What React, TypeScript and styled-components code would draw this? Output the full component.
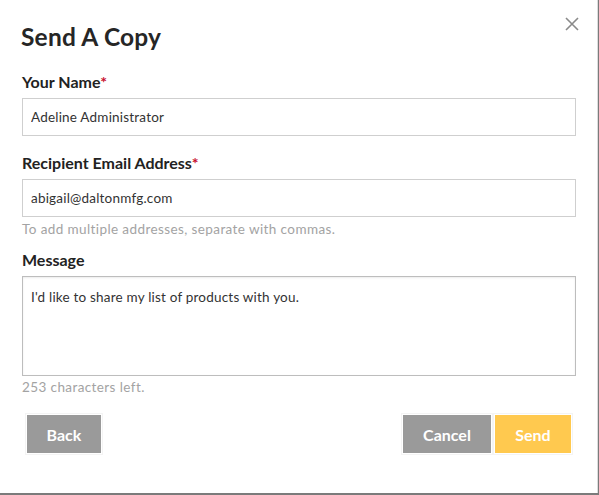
import React, { useState } from 'react';
import styled, { createGlobalStyle } from 'styled-components';

const GlobalStyle = createGlobalStyle`
  html, body {
    margin: 0;
    padding: 0;
    background: #7b7b7b;
  }
  body {
    font-family: Lato, "Open Sans", Arial, sans-serif;
    color: #222;
  }
`;

const Dialog = styled.div`
  position: relative;
  box-sizing: border-box;
  width: 598px;
  height: 493px;
  background: #fff;
  border-right: 1px solid #dcdcdc;
  padding: 22px 22px 0 22px;
`;

const Title = styled.h2`
  margin: 0 0 0 -1px;
  font-size: 24.5px;
  line-height: 30px;
  font-weight: 700;
  color: #262626;
  letter-spacing: 0.2px;
`;

const Close = styled.button`
  position: absolute;
  top: 15px;
  right: 16px;
  width: 18px;
  height: 18px;
  padding: 0;
  border: 0;
  background: none;
  cursor: pointer;
`;

const Field = styled.div<{ $gap: number }>`
  display: flex;
  flex-direction: column;
  margin-top: ${(p) => p.$gap}px;
`;

const Label = styled.label`
  font-size: 16px;
  line-height: 20px;
  font-weight: 700;
  color: #222;
  margin-bottom: 6px;
`;

const Req = styled.span`
  color: #c8102e;
`;

const Input = styled.input`
  box-sizing: border-box;
  width: 554px;
  height: 38px;
  border: 1px solid #cfcfcf;
  padding: 0 8px;
  font-family: Lato, "Open Sans", Arial, sans-serif;
  font-size: 13.5px;
  letter-spacing: 0.2px;
  color: #333;
  outline: none;
`;

const TextArea = styled.textarea`
  box-sizing: border-box;
  width: 554px;
  height: 100px;
  border: 1px solid #bdbdbd;
  box-shadow: inset 0 1px 2px rgba(0, 0, 0, 0.08);
  padding: 11px 8px;
  font-family: Lato, "Open Sans", Arial, sans-serif;
  font-size: 13.5px;
  letter-spacing: 0.2px;
  line-height: 18px;
  color: #333;
  resize: none;
  outline: none;
`;

const Hint = styled.div<{ $gap: number }>`
  font-size: 13.5px;
  letter-spacing: 0.4px;
  line-height: 16px;
  color: #a3a3a3;
  margin-top: ${(p) => p.$gap}px;
`;

const Actions = styled.div`
  display: flex;
  align-items: center;
  padding: 0 4px 0 5px;
  margin-top: 20px;
`;

const Spacer = styled.div`
  flex: 1;
`;

const Button = styled.button<{ $tone: 'gray' | 'gold'; $w: number }>`
  width: ${(p) => p.$w}px;
  height: 38px;
  border: 0;
  outline: 1px solid #f4f4f4;
  outline-offset: 1px;
  background: ${(p) => (p.$tone === 'gold' ? '#ffc94f' : '#9a9a9a')};
  color: #fff;
  font-family: Lato, "Open Sans", Arial, sans-serif;
  font-size: 16px;
  font-weight: 700;
  cursor: pointer;
  & + & {
    margin-left: 4px;
  }
`;

export default function App() {
  const [name, setName] = useState('Adeline Administrator');
  const [email, setEmail] = useState('abigail@daltonmfg.com');
  const [message, setMessage] = useState(
    "I'd like to share my list of products with you."
  );
  const left = 300 - message.length;

  return (
    <>
      <GlobalStyle />
      <Dialog>
        <Title>Send A Copy</Title>
        <Close aria-label="Close">
          <svg width="18" height="18" viewBox="0 0 18 18">
            <path
              d="M3 3 L15 15 M15 3 L3 15"
              stroke="#8a8a8a"
              strokeWidth="1.6"
              fill="none"
            />
          </svg>
        </Close>

        <Field $gap={20}>
          <Label>
            Your Name<Req>*</Req>
          </Label>
          <Input value={name} onChange={(e) => setName(e.target.value)} />
        </Field>

        <Field $gap={17}>
          <Label>
            Recipient Email Address<Req>*</Req>
          </Label>
          <Input value={email} onChange={(e) => setEmail(e.target.value)} />
          <Hint $gap={4}>To add multiple addresses, separate with commas.</Hint>
        </Field>

        <Field $gap={13}>
          <Label>Message</Label>
          <TextArea
            value={message}
            onChange={(e) => setMessage(e.target.value)}
          />
          <Hint $gap={3}>{left} characters left.</Hint>
        </Field>

        <Actions>
          <Button $tone="gray" $w={74}>
            Back
          </Button>
          <Spacer />
          <Button $tone="gray" $w={88}>
            Cancel
          </Button>
          <Button $tone="gold" $w={76}>
            Send
          </Button>
        </Actions>
      </Dialog>
    </>
  );
}
